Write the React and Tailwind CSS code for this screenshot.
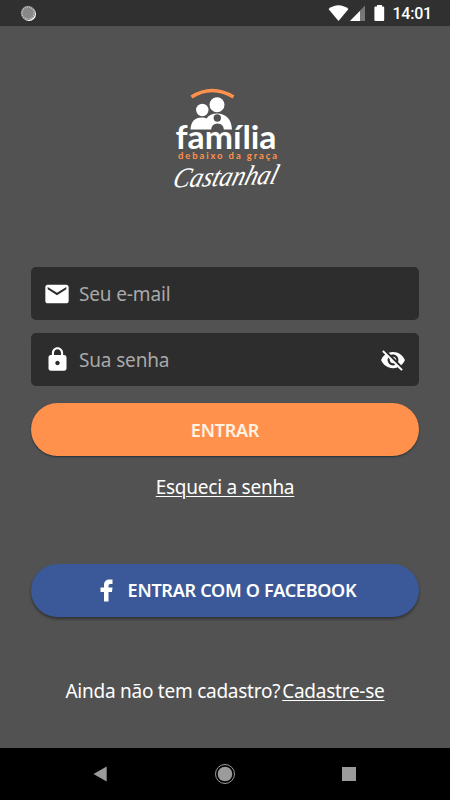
import { useState } from 'react'
import { MdEmail, MdLock, MdVisibilityOff } from 'react-icons/md'

export default function App() {
  const [showPassword, setShowPassword] = useState(false)

  return (
    <div className="flex h-[800px] w-[450px] flex-col overflow-hidden bg-[#525252] font-['Noto_Sans',sans-serif] text-white">
      <StatusBar />
      <main className="flex flex-1 flex-col items-center px-[31px] pt-[54px]">
        <Logo />
        <form className="mt-[72px] flex w-full flex-col" onSubmit={(event) => event.preventDefault()}>
          <Field icon={<MdEmail className="size-[28px]" />} type="email" placeholder="Seu e-mail" />
          <div className="h-[13px]" />
          <Field
            icon={<MdLock className="size-[27px]" />}
            type={showPassword ? 'text' : 'password'}
            placeholder="Sua senha"
            action={
              <button type="button" aria-label="Mostrar senha" onClick={() => setShowPassword(!showPassword)}>
                <MdVisibilityOff className="size-[26px]" />
              </button>
            }
          />
          <button
            type="submit"
            className="mt-[17px] h-[53px] rounded-full bg-[#ff914d] pt-px text-[18px] font-semibold tracking-[-0.25px] text-[#fff3e4] shadow-[0_1px_2px_#243036]"
          >
            ENTRAR
          </button>
        </form>
        <a href="#" className="mt-[17px] text-[19px] leading-[28px] tracking-[-0.25px] underline decoration-1 underline-offset-2">
          Esqueci a senha
        </a>
        <button
          type="button"
          className="mt-[63px] flex h-[53px] w-full items-center justify-center rounded-full bg-[#3b5998] pl-[6px] text-[18px] font-semibold tracking-[-0.27px] shadow-[0_2px_3px_#00000066]"
        >
          <svg className="mr-[15px] h-[23px] w-[13px]" viewBox="0 0 13 23" fill="currentColor">
            <path d="M12.500 0.500H9.500Q4 0.500 4 6V8.500H0.500V13H4V22.500H8.500V13H12L12.500 8.500H8.500V6.500Q8.500 5 10.200 5H12.500Z" />
          </svg>
          ENTRAR COM O FACEBOOK
        </button>
        <p className="mt-[60px] flex gap-[2px] text-[19px] leading-[28px] tracking-[-0.25px] whitespace-nowrap">
          <span>Ainda não tem cadastro?</span>
          <a href="#" className="underline decoration-1 underline-offset-2">Cadastre-se</a>
        </p>
      </main>
      <NavigationBar />
    </div>
  )
}

function Field({ icon, type, placeholder, action }) {
  return (
    <label className="flex h-[53px] items-center rounded-[5px] bg-[#2d2d2d] pr-[13px] pl-[12px]">
      <span className="flex w-[28px] justify-center">{icon}</span>
      <input
        type={type}
        placeholder={placeholder}
        className="ml-[8px] min-w-0 flex-1 bg-transparent pt-px text-[19px] tracking-[-0.15px] outline-none placeholder:text-[#a9a9a9]"
      />
      {action}
    </label>
  )
}

function StatusBar() {
  return (
    <header className="flex h-[26px] shrink-0 items-center bg-[#303030] pr-[18px] pl-[20px]">
      <svg className="size-[17px]" viewBox="0 0 17 17">
        <circle cx="9" cy="9" r="7" fill="#fff" />
        <circle cx="8" cy="8" r="7.200" fill="#888" />
        <circle cx="8" cy="8" r="6" fill="none" stroke="#ccc" strokeWidth="1.2" strokeDasharray="1 1.2" />
      </svg>
      <svg className="ml-auto h-[18px] w-[60px]" viewBox="326 4 60 18">
        <path d="M329.500 9Q339.500 1.500 349.500 9L339.500 21Z" fill="#fff" />
        <path d="M351 21L366 5.500V21Z" fill="#777" />
        <path d="M351 21L361 11V21Z" fill="#fff" />
        <path d="M378 5h5v1.500h1.200q1 0 1 1V20q0 1-1 1h-7.800q-1 0-1-1V7.500q0-1 1-1H378Z" fill="#fff" />
      </svg>
      <span className="ml-[7px] pt-px font-['Roboto',sans-serif] text-[16px] leading-none font-medium tracking-[-0.2px]">14:01</span>
    </header>
  )
}

function Logo() {
  return (
    <svg className="h-[115px] w-[130px] overflow-visible" viewBox="160 80 130 115" role="img" aria-label="Família debaixo da graça Castanhal">
      <path d="M191.500 97Q212 84 233.500 97" fill="none" stroke="#ff914d" strokeWidth="3.500" />
      <g fill="#fff">
        <circle cx="202.300" cy="110" r="6.200" />
        <circle cx="217" cy="104.700" r="7.500" />
        <path d="M190.500 129.500Q191 117.500 202 117.500Q205 117.500 206.500 118.500Q210 113.500 217 113.500Q231 114 232 129.500Z" />
      </g>
      <circle cx="217.300" cy="118" r="3.700" fill="#525252" />
      <path d="M211 130Q211.500 123.500 217.500 123.500Q223.500 123.500 224 130Z" fill="#525252" />
      <text x="175.500" y="149" textLength="101" lengthAdjust="spacingAndGlyphs" fill="#fff" className="font-['Lato',sans-serif] text-[32px] font-bold">família</text>
      <text x="178" y="159" textLength="99" fill="#ff914d" className="font-['Lato',sans-serif] text-[9.5px] font-bold">debaixo da graça</text>
      <text
        transform="translate(171.500 187.500) rotate(-2) skewX(-18)"
        textLength="104"
        lengthAdjust="spacingAndGlyphs"
        fill="#fff"
        className="font-['Brush_Script_MT','Liberation_Serif',cursive] text-[28px] italic"
      >
        Castanhal
      </text>
    </svg>
  )
}

function NavigationBar() {
  return (
    <nav className="flex h-[52px] shrink-0 items-center justify-between bg-black pr-[93px] pl-[92px] text-[#9b9b9b]">
      <button type="button" aria-label="Voltar">
        <svg className="size-[16px]" viewBox="0 0 16 16"><path d="M1.500 8L14.700 0.500V15.500Z" fill="currentColor" /></svg>
      </button>
      <button type="button" aria-label="Início">
        <svg className="size-[22px]" viewBox="0 0 22 22">
          <circle cx="11" cy="11" r="9.500" fill="none" stroke="currentColor" strokeWidth="1" />
          <circle cx="11" cy="11" r="7.300" fill="currentColor" />
        </svg>
      </button>
      <button type="button" aria-label="Recentes">
        <svg className="size-[16px]" viewBox="0 0 16 16"><rect x="1" y="1" width="14" height="14" fill="currentColor" /></svg>
      </button>
    </nav>
  )
}
